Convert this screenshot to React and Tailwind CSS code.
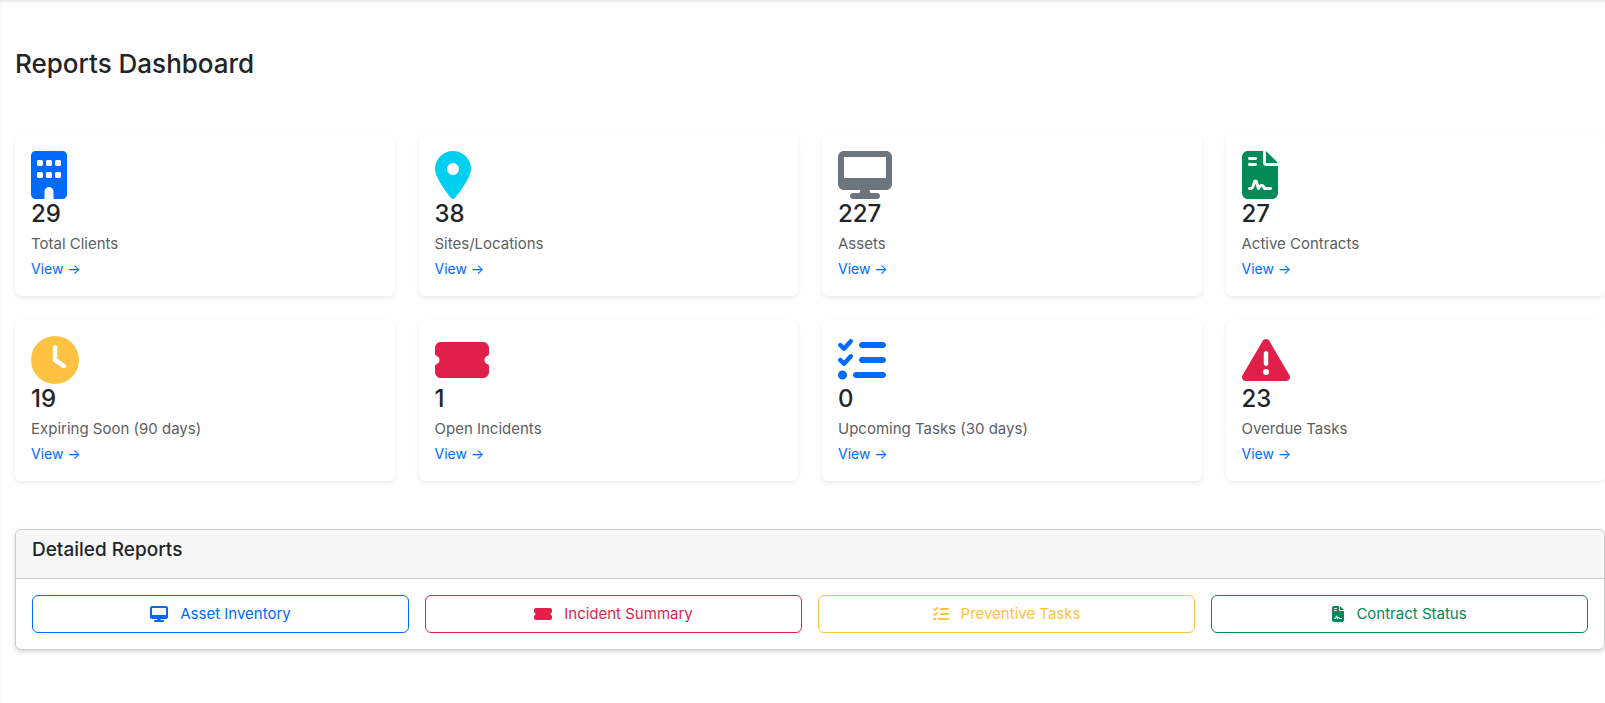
import {
  FaBuilding,
  FaClock,
  FaDesktop,
  FaFileContract,
  FaListCheck,
  FaLocationDot,
  FaTicketSimple,
  FaTriangleExclamation,
} from 'react-icons/fa6';

const stats = [
  { label: 'Total Clients', value: 29, icon: FaBuilding, style: 'w-9 text-[#006aff]' },
  { label: 'Sites/Locations', value: 38, icon: FaLocationDot, style: 'w-9 text-[#00cfef]' },
  { label: 'Assets', value: 227, icon: FaDesktop, style: 'w-[54px] text-[#6c757d]' },
  { label: 'Active Contracts', value: 27, icon: FaFileContract, style: 'w-9 text-[#008b57]' },
  { label: 'Expiring Soon (90 days)', value: 19, icon: FaClock, style: 'w-12 text-[#ffc241]' },
  { label: 'Open Incidents', value: 1, icon: FaTicketSimple, style: 'w-[54px] text-[#e01f4a]' },
  { label: 'Upcoming Tasks (30 days)', value: 0, icon: FaListCheck, style: 'w-12 text-[#006aff]' },
  { label: 'Overdue Tasks', value: 23, icon: FaTriangleExclamation, style: 'w-12 text-[#e01f4a]' },
];

const reports = [
  { label: 'Asset Inventory', icon: FaDesktop, iconWidth: 'w-[18px]', color: 'border-[#006aff] text-[#006aff]' },
  { label: 'Incident Summary', icon: FaTicketSimple, iconWidth: 'w-[18px]', color: 'border-[#e01f4a] text-[#e01f4a]' },
  { label: 'Preventive Tasks', icon: FaListCheck, iconWidth: 'w-4', color: 'border-[#ffc241] text-[#ffc241]' },
  { label: 'Contract Status', icon: FaFileContract, iconWidth: 'w-3', color: 'border-[#008b57] text-[#008b57]' },
];

function StatCard({ label, value, icon: Icon, style }) {
  return (
    <div className="rounded-md bg-white p-4 shadow-[0_2px_4px_rgba(0,0,0,0.075)]">
      <Icon className={`h-12 ${style}`} />
      <h2 className="mb-1 text-2xl leading-[29px] font-medium">{value}</h2>
      <p className="text-[15px] leading-6 text-[#5c5f63]">{label}</p>
      <div className="h-6 text-base">
        <a href="#" className="text-sm text-[#006aff]">
          View →
        </a>
      </div>
    </div>
  );
}

export default function App() {
  return (
    <div className="min-h-screen bg-[#fefefe] pl-[15px] font-['Inter','Liberation_Sans',sans-serif] text-[#212529] shadow-[inset_0_5px_4px_-4px_rgba(0,0,0,0.12),inset_1px_0_0_rgba(0,0,0,0.015)]">
      <h1 className="pt-[47px] pb-[54px] text-[26px] leading-[34px] font-medium">
        Reports Dashboard
      </h1>

      <div className="grid grid-cols-1 gap-6 sm:grid-cols-2 lg:grid-cols-4">
        {stats.map((stat) => (
          <StatCard key={stat.label} {...stat} />
        ))}
      </div>

      <section className="mt-12 rounded-md border border-[#cccccc] bg-white shadow-[0_2px_4px_rgba(0,0,0,0.15)]">
        <header className="rounded-t-md border-b border-[#cccccc] bg-[#f7f7f7] px-4 pt-2 pb-4">
          <h2 className="text-[19px] leading-6 font-medium">Detailed Reports</h2>
        </header>
        <div className="grid grid-cols-1 gap-4 p-4 sm:grid-cols-2 lg:grid-cols-4">
          {reports.map(({ label, icon: Icon, iconWidth, color }) => (
            <a
              key={label}
              href="#"
              className={`flex items-center justify-center gap-3 rounded-md border py-1.5 text-[15px] leading-6 ${color}`}
            >
              <Icon className={`h-4 ${iconWidth}`} />
              {label}
            </a>
          ))}
        </div>
      </section>
    </div>
  );
}
